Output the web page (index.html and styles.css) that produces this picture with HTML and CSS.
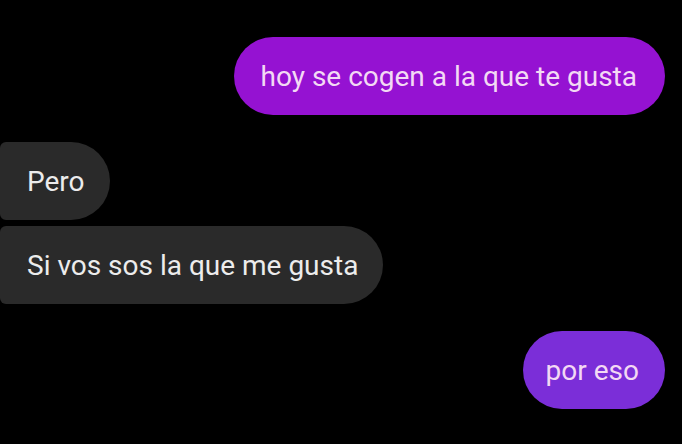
FILE: index.html
```html
<!DOCTYPE html>
<html lang="es">
<head>
<meta charset="utf-8">
<link rel="stylesheet" href="styles.css">
</head>
<body>
<div class="chat">
  <div class="msg out first">hoy se cogen a la que te gusta</div>
  <div class="msg in gap">Pero</div>
  <div class="msg in">Si vos sos la que me gusta</div>
  <div class="msg out violet gap">por eso</div>
</div>
</body>
</html>
```
FILE: styles.css
```css
html, body {
  margin: 0;
  padding: 0;
  background: #000;
  width: 682px;
  height: 444px;
  overflow: hidden;
}
.chat {
  display: flex;
  flex-direction: column;
  padding: 37px 17px 0 0;
  gap: 6px;
  font-family: Roboto, "Noto Sans", sans-serif;
}
.msg {
  height: 78px;
  border-radius: 39px;
  display: flex;
  align-items: center;
  padding: 2px 28px 0 27px;
  font-size: 28px;
  line-height: 1;
  box-sizing: border-box;
  white-space: nowrap;
}
.out {
  align-self: flex-end;
  background: #9512d2;
  color: #f3d9f4;
}
.out.violet {
  background: #7b2ed8;
  padding: 2px 26px 0 23px;
}
.in {
  align-self: flex-start;
  background: #2a2a2a;
  color: #ececec;
  border-radius: 6px 39px 39px 6px;
  padding-right: 25px;
}
.gap {
  margin-top: 21px;
}
```
